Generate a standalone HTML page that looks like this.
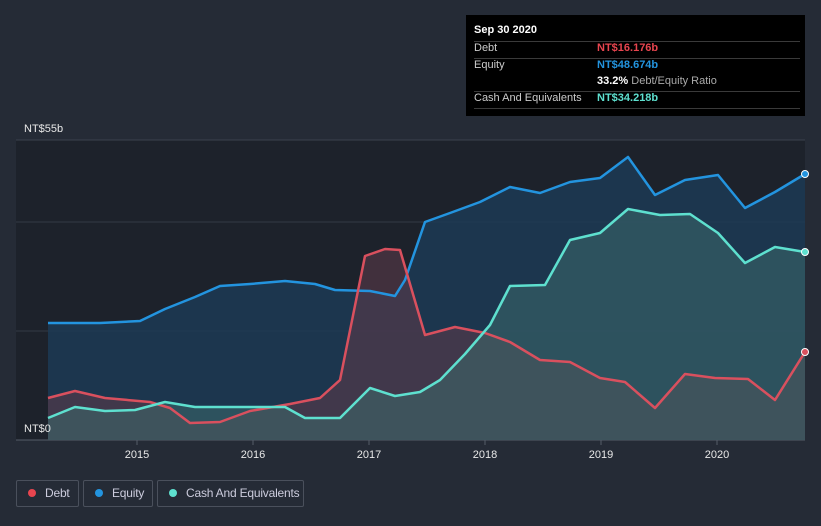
<!DOCTYPE html>
<html><head><style>
body{margin:0;width:821px;height:526px;background:#252b36;font-family:"Liberation Sans",sans-serif;overflow:hidden;position:relative}
.tt{position:absolute;left:466px;top:15px;width:339px;height:101px;background:#000;color:#ccc;font-size:11px}
.tt .r{position:absolute;left:8px;right:5px;border-top:1px solid #3a3a3a}
.lg{position:absolute;top:480px;height:27px;border:1px solid #4a505c;border-radius:2px;color:#ccd;font-size:12px;line-height:25px;box-sizing:border-box;white-space:nowrap;letter-spacing:-0.2px}
.lg i{display:inline-block;width:8px;height:8px;border-radius:50%;margin:0 9px 0 11px}
</style></head><body>
<svg width="821" height="526" style="position:absolute;left:0;top:0">
<rect x="16" y="140" width="789" height="300" fill="#1d222b"/>
<line x1="16" y1="140" x2="805" y2="140" stroke="#3a414d"/>
<line x1="16" y1="222" x2="805" y2="222" stroke="#333a45"/>
<line x1="16" y1="331" x2="805" y2="331" stroke="#333a45"/>
<line x1="16" y1="440" x2="805" y2="440" stroke="#555c68"/>
<g fill="none" stroke-width="2.5" stroke-linejoin="round">
<path d="M48,323 L100,323 140,321 165,309 195,297 220,286 250,284 285,281 315,284 335,290 370,291 395,296 405,280 425,222 450,213 480,202 510,187 540,193 570,182 600,178 628,157 655,195 685,180 718,175 745,208 775,192 805,174 L805,440 48,440Z" fill="#1c3a55" fill-opacity="0.85" stroke="none"/>
<path d="M48,398 75,391 105,398 150,402 170,408 190,423 220,422 250,411 290,404 320,398 340,380 365,256 385,249 400,250 425,335 455,327 485,333 510,342 540,360 570,362 600,378 625,382 655,408 685,374 715,378 748,379 775,400 805,352 L805,440 48,440Z" fill="#5a3a4a" fill-opacity="0.6" stroke="none"/>
<path d="M48,418 75,407 105,411 135,410 165,402 195,407 240,407 285,407 305,418 340,418 370,388 395,396 420,392 440,380 465,354 490,325 510,286 545,285 570,240 600,233 628,209 660,215 690,214 718,233 745,263 775,247 805,252 L805,440 48,440Z" fill="#3d6a6c" fill-opacity="0.55" stroke="none"/>
<path d="M48,323 L100,323 140,321 165,309 195,297 220,286 250,284 285,281 315,284 335,290 370,291 395,296 405,280 425,222 450,213 480,202 510,187 540,193 570,182 600,178 628,157 655,195 685,180 718,175 745,208 775,192 805,174" stroke="#2394df"/>
<path d="M48,398 75,391 105,398 150,402 170,408 190,423 220,422 250,411 290,404 320,398 340,380 365,256 385,249 400,250 425,335 455,327 485,333 510,342 540,360 570,362 600,378 625,382 655,408 685,374 715,378 748,379 775,400 805,352" stroke="#d9505e"/>
<path d="M48,418 75,407 105,411 135,410 165,402 195,407 240,407 285,407 305,418 340,418 370,388 395,396 420,392 440,380 465,354 490,325 510,286 545,285 570,240 600,233 628,209 660,215 690,214 718,233 745,263 775,247 805,252" stroke="#5ee0cf"/>
</g>
<circle cx="805" cy="174" r="3.5" fill="#2394df" stroke="#fff"/>
<circle cx="805" cy="252" r="3.5" fill="#5ee0cf" stroke="#fff"/>
<circle cx="805" cy="352" r="3.5" fill="#d9505e" stroke="#fff"/>
<g stroke="#555c68"><line x1="137" y1="440" x2="137" y2="445"/><line x1="253" y1="440" x2="253" y2="445"/><line x1="369" y1="440" x2="369" y2="445"/><line x1="485" y1="440" x2="485" y2="445"/><line x1="601" y1="440" x2="601" y2="445"/><line x1="717" y1="440" x2="717" y2="445"/></g>
<g fill="#e8e8e8" font-size="11" text-anchor="middle"><text x="137" y="458">2015</text><text x="253" y="458">2016</text><text x="369" y="458">2017</text><text x="485" y="458">2018</text><text x="601" y="458">2019</text><text x="717" y="458">2020</text></g>
<text x="24" y="132" fill="#e8e8e8" font-size="11">NT$55b</text>
<text x="24" y="432" fill="#e8e8e8" font-size="11">NT$0</text>
</svg>
<div class="tt">
<div style="position:absolute;left:8px;top:9px;color:#fff;font-weight:bold">Sep 30 2020</div>
<div class="r" style="top:26px"></div>
<div style="position:absolute;left:8px;top:27px">Debt</div><div style="position:absolute;left:131px;top:27px;color:#e8454f;font-weight:bold">NT$16.176b</div>
<div class="r" style="top:43px"></div>
<div style="position:absolute;left:8px;top:44px">Equity</div><div style="position:absolute;left:131px;top:44px;color:#2394df;font-weight:bold">NT$48.674b</div>
<div style="position:absolute;left:131px;top:60px;color:#aaa"><b style="color:#fff">33.2%</b> Debt/Equity Ratio</div>
<div class="r" style="top:76px"></div>
<div style="position:absolute;left:8px;top:77px">Cash And Equivalents</div><div style="position:absolute;left:131px;top:77px;color:#5ee0cf;font-weight:bold">NT$34.218b</div>
<div class="r" style="top:93px"></div>
</div>
<div class="lg" style="left:16px;width:63px"><i style="background:#e8454f"></i>Debt</div>
<div class="lg" style="left:83px;width:70px"><i style="background:#2394df"></i>Equity</div>
<div class="lg" style="left:157px;width:147px"><i style="background:#5ee0cf"></i>Cash And Equivalents</div>
</body></html>
